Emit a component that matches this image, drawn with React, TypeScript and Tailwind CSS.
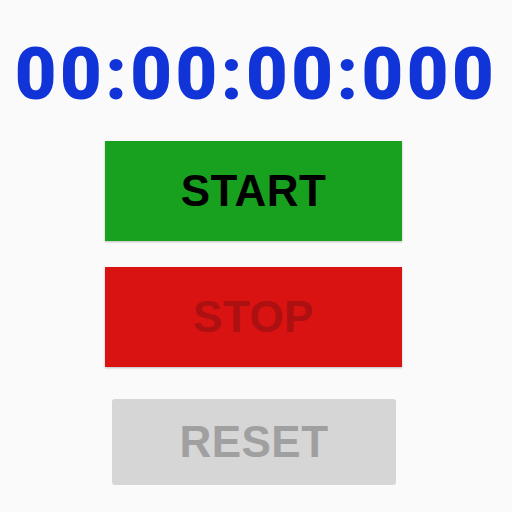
export default function App() {
  return (
    <div className="w-[512px] h-[512px] bg-[#fafafa] flex flex-col overflow-hidden" style={{ fontFamily: "Roboto, 'Liberation Sans', sans-serif" }}>
      <div className="mt-[33px] h-[84px] flex items-center justify-center text-[72px] tracking-[3.5px] font-black text-[#1034d8] leading-none">
        00:00:00:000
      </div>
      <button className="ml-[105px] mt-[24px] w-[297px] h-[100px] bg-[#17a11e] shadow-[0_1px_2px_rgba(0,0,0,0.25)] font-['Liberation_Sans',sans-serif] text-[44px] tracking-[0.01em] font-bold text-black flex items-center justify-center">
        START
      </button>
      <button className="ml-[105px] mt-[26px] w-[297px] h-[100px] bg-[#d91212] shadow-[0_1px_2px_rgba(0,0,0,0.25)] font-['Liberation_Sans',sans-serif] text-[44px] tracking-[0.01em] font-bold text-[#ad1010] flex items-center justify-center">
        STOP
      </button>
      <button className="ml-[112px] mt-[32px] w-[284px] h-[86px] bg-[#d6d6d6] rounded-[3px] font-['Liberation_Sans',sans-serif] text-[44px] tracking-[0.01em] font-bold text-[#a0a0a0] flex items-center justify-center">
        RESET
      </button>
    </div>
  );
}
